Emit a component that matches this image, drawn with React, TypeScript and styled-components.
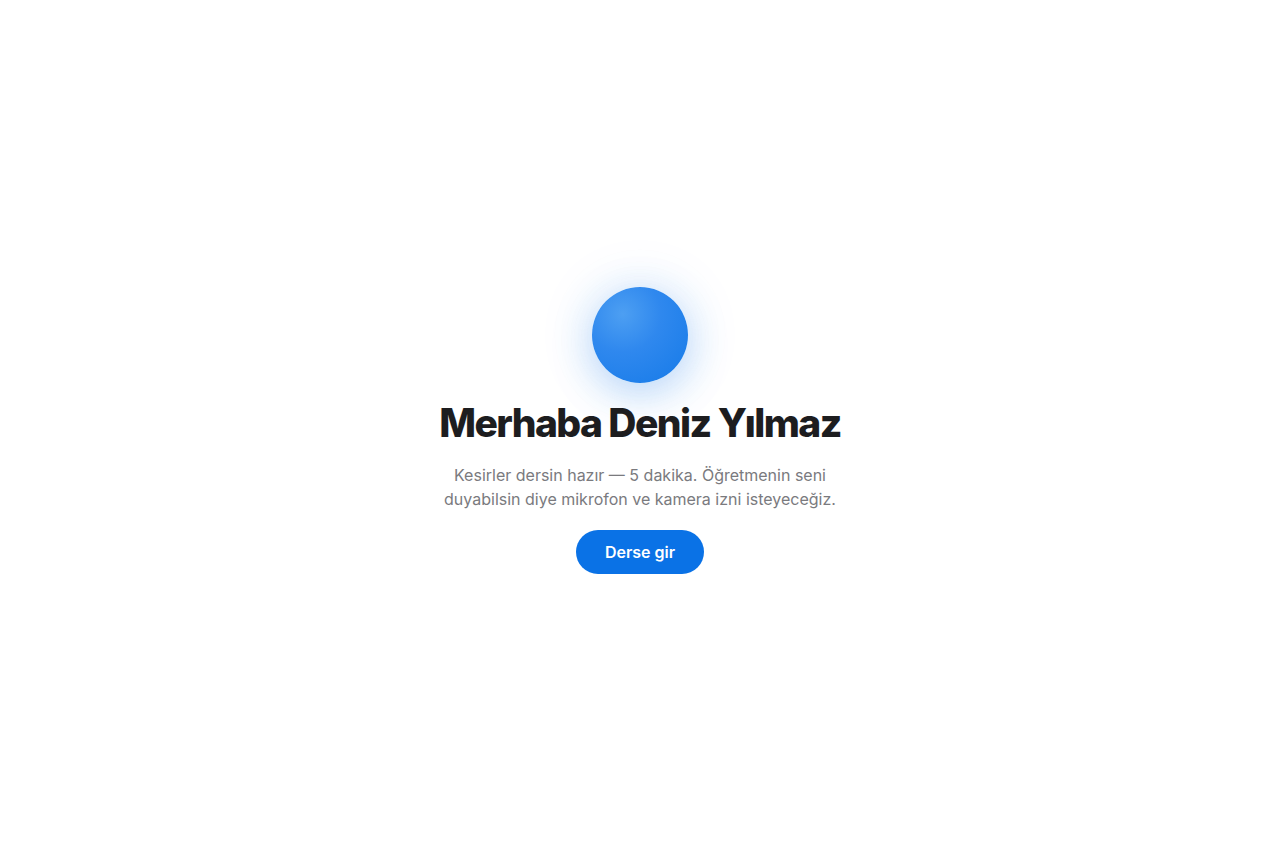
import React from 'react';
import styled, { createGlobalStyle } from 'styled-components';

const GlobalStyle = createGlobalStyle`
	html, body, #root {
		margin: 0;
		height: 100%;
		background: #ffffff;
	}
	body {
		font-family: Inter, "Noto Sans", sans-serif;
		-webkit-font-smoothing: antialiased;
	}
`;

const Page = styled.main`
	height: 100vh;
	display: flex;
	align-items: center;
	justify-content: center;
`;

const Card = styled.section`
	display: flex;
	flex-direction: column;
	align-items: center;
	text-align: center;
	max-width: 420px;
`;

const Orb = styled.div`
	width: 96px;
	height: 96px;
	border-radius: 50%;
	background: radial-gradient(circle at 32% 28%, #4d9ff2 0%, #2f88ee 40%, #157ae8 100%);
	box-shadow: 0 10px 40px rgba(30, 125, 235, 0.28), 0 0 60px rgba(30, 125, 235, 0.12);
	margin-bottom: 16px;
`;

const Title = styled.h1`
	margin: 0 0 16px;
	font-family: Inter, sans-serif;
	font-size: 39px;
	line-height: 48px;
	font-weight: 800;
	letter-spacing: -0.04em;
	color: #1d1d1f;
`;

const Lead = styled.p`
	margin: 0 0 19px;
	font-size: 16px;
	line-height: 24px;
	color: #7a7a7e;
	max-width: 400px;
`;

const PrimaryButton = styled.button`
	height: 44px;
	padding: 0 29px;
	border: none;
	border-radius: 22px;
	background: #0a72e6;
	color: #ffffff;
	font-family: Inter, sans-serif;
	font-size: 16px;
	font-weight: 600;
	cursor: pointer;
`;

const App = () => (
	<>
		<GlobalStyle />
		<Page>
			<Card>
				<Orb />
				<Title>Merhaba Deniz Yılmaz</Title>
				<Lead>
					Kesirler dersin hazır — 5 dakika. Öğretmenin seni duyabilsin diye mikrofon ve kamera izni isteyeceğiz.
				</Lead>
				<PrimaryButton>Derse gir</PrimaryButton>
			</Card>
		</Page>
	</>
);

export default App;
